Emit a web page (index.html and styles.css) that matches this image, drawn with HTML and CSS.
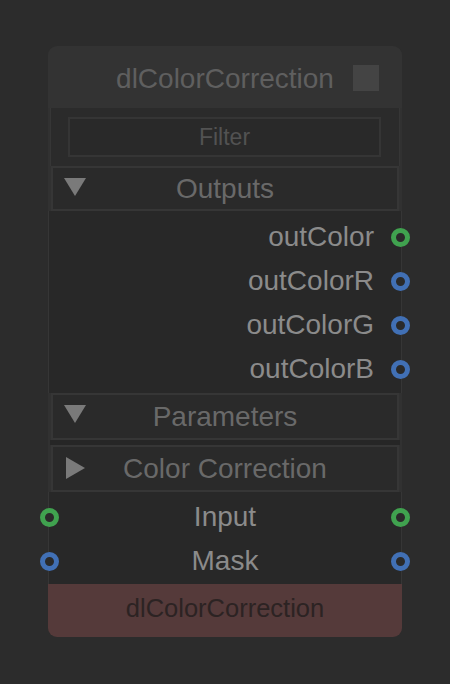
FILE: index.html
```html
<!DOCTYPE html>
<html lang="en">
  <head>
    <meta charset="UTF-8" />
    <meta name="viewport" content="width=device-width, initial-scale=1.0" />
    <title>dlColorCorrection</title>
    <link rel="stylesheet" href="styles.css">
  </head>
  <body>
    <div class="node">
      <div class="node-head">
        <span class="title">dlColorCorrection</span>
        <span class="toggle"></span>
      </div>
      <div class="node-body">
        <div class="filter-wrap">
          <div class="filter">Filter</div>
        </div>

        <div class="section outputs-head">
          <span class="tri down"></span>
          <span class="section-label">Outputs</span>
        </div>
        <div class="rows outputs">
          <div class="row"><span class="label">outColor</span><span class="port green"></span></div>
          <div class="row"><span class="label">outColorR</span><span class="port blue"></span></div>
          <div class="row"><span class="label">outColorG</span><span class="port blue"></span></div>
          <div class="row"><span class="label">outColorB</span><span class="port blue"></span></div>
        </div>

        <div class="section">
          <span class="tri down"></span>
          <span class="section-label">Parameters</span>
        </div>
        <div class="spacer"></div>
        <div class="section">
          <span class="tri right"></span>
          <span class="section-label">Color Correction</span>
        </div>

        <div class="rows io">
          <div class="row"><span class="port green"></span><span class="label">Input</span><span class="port green"></span></div>
          <div class="row"><span class="port blue"></span><span class="label">Mask</span><span class="port blue"></span></div>
        </div>
      </div>
      <div class="node-foot">dlColorCorrection</div>
    </div>
  </body>
</html>
```

FILE: styles.css
```css
/* Base */
body {
  margin: 0;
  background: #2c2c2c;
  font-family: "Liberation Sans", Arial, sans-serif;
}

.node {
  width: 354px;
  margin: 46px 0 0 48px;
}

/* Header */
.node-head {
  height: 62px;
  box-sizing: border-box;
  padding-top: 4px;
  background: #333333;
  border-radius: 9px 9px 0 0;
  display: flex;
  align-items: center;
  position: relative;
}
.title {
  flex: 1;
  text-align: center;
  font-size: 28px;
  color: #5f5f5f;
}
.toggle {
  position: absolute;
  right: 23px;
  top: 19px;
  width: 26px;
  height: 26px;
  background: #444444;
}

/* Body */
.node-body {
  background: #313131;
  padding: 0 2px;
}
.filter-wrap {
  height: 58px;
  background: #2b2b2b;
  border-left: 1px solid #363636;
  border-right: 1px solid #363636;
  box-sizing: border-box;
  padding: 9px 0 0 17px;
}
.filter {
  width: 313px;
  height: 40px;
  box-sizing: border-box;
  background: #292929;
  border: 2px solid #353535;
  color: #525252;
  font-size: 23px;
  display: flex;
  align-items: center;
  justify-content: center;
}

.section {
  height: 47px;
  box-sizing: border-box;
  background: #2a2a2a;
  border: 2px solid #363636;
  margin: 0 1px;
  position: relative;
  display: flex;
  align-items: center;
  justify-content: center;
  color: #696969;
  font-size: 28px;
}
.section.outputs-head {
  height: 45px;
}
.spacer {
  height: 5px;
  background: #262626;
}
.tri {
  position: absolute;
  left: 11px;
  width: 0;
  height: 0;
}
.tri.down {
  top: 10px;
  border-left: 11px solid transparent;
  border-right: 11px solid transparent;
  border-top: 18px solid #7a7a7a;
}
.tri.right {
  top: 10px;
  left: 13px;
  border-top: 11px solid transparent;
  border-bottom: 11px solid transparent;
  border-left: 19px solid #7a7a7a;
}

/* Port rows */
.rows {
  background: #282828;
  border-left: 1px solid #363636;
  border-right: 1px solid #363636;
  margin: 0 -2px;
  padding: 4px 0 2px;
}
.rows.io {
  padding: 3px 0 1px;
}
.row {
  height: 44px;
  display: flex;
  align-items: center;
  font-size: 28px;
  color: #8b8b8b;
}
.outputs .row {
  justify-content: flex-end;
}
.outputs .label {
  margin-right: 17px;
}
.io .label {
  flex: 1;
  text-align: center;
}
.port {
  width: 19px;
  height: 19px;
  flex: none;
  box-sizing: border-box;
  border-radius: 50%;
  border: 5px solid;
  background: #2a2a2a;
}
.outputs .port {
  margin-right: -9px;
}
.io .port:first-child {
  margin-left: -9px;
}
.io .port:last-child {
  margin-right: -9px;
}
.port.green {
  border-color: #40a24f;
}
.port.blue {
  border-color: #4170b5;
}

/* Footer */
.node-foot {
  height: 53px;
  background: #553a3a;
  border-radius: 0 0 9px 9px;
  display: flex;
  align-items: center;
  justify-content: center;
  padding-bottom: 4px;
  box-sizing: border-box;
  font-size: 25.5px;
  color: #2c2323;
}
```
